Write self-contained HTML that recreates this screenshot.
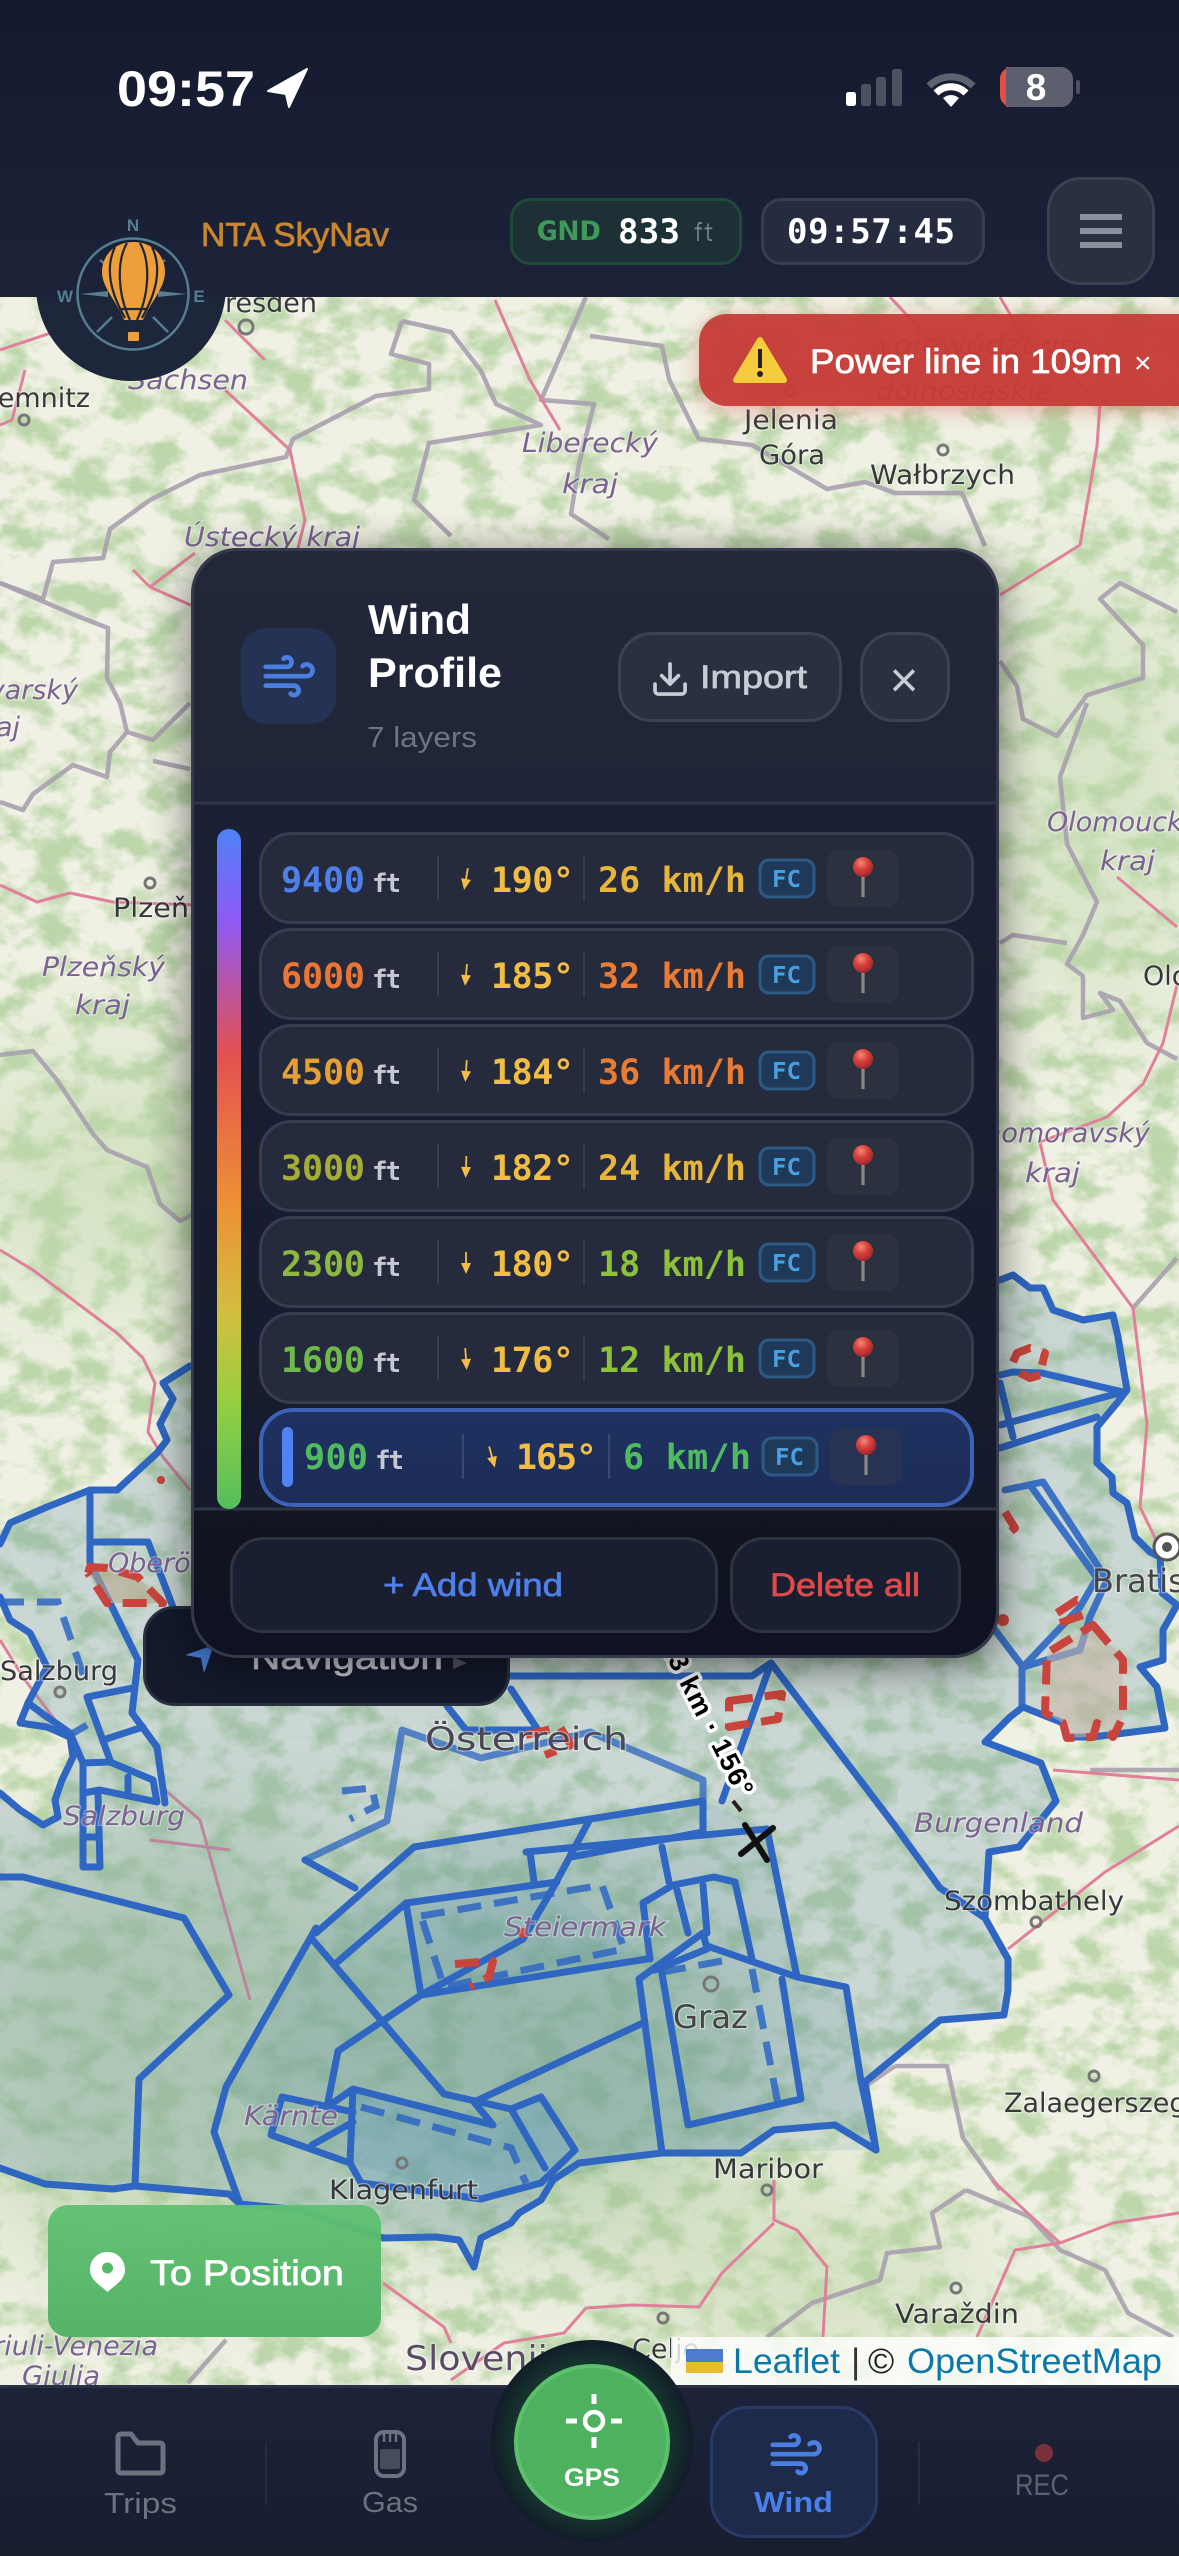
<!DOCTYPE html>
<html lang="en">
<head>
<meta charset="utf-8">
<title>NTA SkyNav</title>
<style>
html,body{margin:0;padding:0;background:#141a2e;width:1179px;height:2556px;overflow:hidden}
svg{display:block;position:absolute;left:0;top:0}
text{font-family:"Liberation Sans",sans-serif}
.s{stroke-width:.7px;paint-order:stroke}
.m{font-family:"DejaVu Sans Mono","Liberation Mono",monospace;font-weight:700;font-size:35px}
.ft{font-family:"DejaVu Sans Mono","Liberation Mono",monospace;font-weight:700;font-size:26px;fill:#c6c9d2}
.fc{font-family:"DejaVu Sans Mono","Liberation Mono",monospace;font-weight:700;font-size:23px;fill:#4b9fe0}
.deg{fill:#f2bd45}
.c{font-family:"DejaVu Sans",sans-serif;font-size:27px;fill:#38383c;stroke:#fff;stroke-opacity:.4;stroke-width:2.500px;paint-order:stroke}
.r{font-family:"DejaVu Sans",sans-serif;font-style:italic;font-size:27px;fill:#7b6290;stroke:#fff;stroke-opacity:.35;stroke-width:2.500px;paint-order:stroke}
.a{fill:none;stroke:#2e66c2;stroke-width:7;stroke-linejoin:round;stroke-linecap:round}
.d{fill:none;stroke:#2e66c2;stroke-width:7;stroke-dasharray:24 13;opacity:.85}
.x{fill:none;stroke:#c8443c;stroke-width:8;stroke-linejoin:round;stroke-dasharray:24 12}
.b{fill:none;stroke:#a9a0ae;stroke-width:4.500;stroke-linejoin:round;opacity:.9}
.p{fill:none;stroke:#e0809a;stroke-width:3;stroke-linejoin:round}
</style>
</head>
<body>
<svg width="1179" height="2556" viewBox="0 0 1179 2556" xmlns="http://www.w3.org/2000/svg">
<defs>
<filter id="gn" x="0" y="0" width="100%" height="100%" color-interpolation-filters="sRGB">
<feTurbulence type="fractalNoise" baseFrequency=".028 .036" numOctaves="5" seed="11"/>
<feColorMatrix values="0 0 0 0 .74  0 0 0 0 .84  0 0 0 0 .67  3.6 0 0 0 -1.55"/>
</filter>
<filter id="bl40"><feGaussianBlur stdDeviation="60"/></filter>
<filter id="sh" x="-20%" y="-20%" width="140%" height="140%"><feGaussianBlur stdDeviation="22"/></filter>
<filter id="sh2" x="-20%" y="-50%" width="140%" height="200%"><feGaussianBlur stdDeviation="11"/></filter>
<linearGradient id="hdr" x1="0" y1="0" x2="0" y2="1"><stop offset="0" stop-color="#141a2e"/><stop offset="1" stop-color="#1c2339"/></linearGradient>
<linearGradient id="nav" x1="0" y1="0" x2="0" y2="1"><stop offset="0" stop-color="#1c2338"/><stop offset="1" stop-color="#181d30"/></linearGradient>
<linearGradient id="ph" x1="0" y1="0" x2="0" y2="1"><stop offset="0" stop-color="#222839"/><stop offset="1" stop-color="#1f2538"/></linearGradient>
<linearGradient id="pl" x1="0" y1="0" x2="0" y2="1"><stop offset="0" stop-color="#1b2034"/><stop offset="1" stop-color="#151a2d"/></linearGradient>
<linearGradient id="pf" x1="0" y1="0" x2="0" y2="1"><stop offset="0" stop-color="#11151f"/><stop offset="1" stop-color="#0e1222"/></linearGradient>
<linearGradient id="bar" x1="0" y1="0" x2="0" y2="1">
<stop offset="0" stop-color="#4f82f6"/><stop offset=".13" stop-color="#8c5af8"/><stop offset=".33" stop-color="#e35050"/><stop offset=".55" stop-color="#ee9035"/><stop offset=".72" stop-color="#d0c040"/><stop offset=".85" stop-color="#92cf40"/><stop offset="1" stop-color="#55bf5e"/>
</linearGradient>
<linearGradient id="sel" x1="0" y1="0" x2="0" y2="1"><stop offset="0" stop-color="#1f3260"/><stop offset="1" stop-color="#1c2c58"/></linearGradient>
<linearGradient id="tp" x1="0" y1="0" x2="0" y2="1"><stop offset="0" stop-color="#60c172" stop-opacity=".96"/><stop offset="1" stop-color="#4fb163" stop-opacity=".96"/></linearGradient>
<radialGradient id="ball" cx=".4" cy=".3" r=".75"><stop offset="0" stop-color="#f48a80"/><stop offset=".45" stop-color="#d8403c"/><stop offset="1" stop-color="#96242a"/></radialGradient>
<radialGradient id="gpsg" cx=".5" cy=".5" r=".5"><stop offset=".72" stop-color="#173a2e"/><stop offset="1" stop-color="#111c28"/></radialGradient>
<clipPath id="mapc"><rect x="0" y="297" width="1179" height="2090"/></clipPath>
<clipPath id="pc"><rect x="191" y="548" width="808" height="1110" rx="46"/></clipPath>
<g id="pin"><rect x="-1.600" y="0" width="3.200" height="28" fill="#8d8a86"/><circle cx="0" cy="-2" r="10" fill="url(#ball)"/></g>
<g id="arrow"><rect x="-.9" y="-11" width="1.800" height="12" fill="#f2bd45"/><path d="M-5 0H5L0 11Z" fill="#f2bd45"/></g>
<g id="row">
<rect x="260.500" y="1.500" width="712" height="89" rx="31" fill="#252a3c" stroke="#373c4e" stroke-width="3"/>
<path d="M438 24V69M584 24V69" stroke="#3a3f50" stroke-width="2"/>
<rect x="760" y="28" width="54" height="37" rx="9" fill="#1f3a58" stroke="#2c5a88" stroke-width="3"/>
<rect x="827" y="18" width="72" height="57" rx="12" fill="#2c3140"/>
<use href="#pin" x="863" y="37"/>
</g>
</defs>

<!-- MAP -->
<g clip-path="url(#mapc)">
<rect x="0" y="297" width="1179" height="2090" fill="#f0f1e4"/>
<rect x="0" y="297" width="1179" height="2090" filter="url(#gn)"/>
<g filter="url(#bl40)" opacity=".55">
<ellipse cx="180" cy="2050" rx="240" ry="230" fill="#a9c79a"/>
<ellipse cx="520" cy="2060" rx="240" ry="180" fill="#93b98e"/>
<ellipse cx="120" cy="1180" rx="180" ry="130" fill="#bfd8ab"/>
<ellipse cx="1100" cy="800" rx="100" ry="240" fill="#bfd8ab"/>
<ellipse cx="800" cy="2280" rx="180" ry="90" fill="#b9d3a3"/>
</g>

<!-- borders and roads -->
<path class="b" d="M402 321L391 354L429 364L429 389L376 396L293 439L286 457L200 475L150 500L110 529L103 558L53 562L43 599L0 583"/>
<path class="b" d="M590 336L662 346L669 379L699 439L752 445L827 489L865 482L895 493L962 493L985 546"/>
<path class="b" d="M402 321L451 332L481 371L496 404L541 425L429 443L414 500L451 536"/>
<path class="b" d="M586 297L541 400L594 404L579 464L571 514L609 539" stroke-width="4"/>
<path class="b" d="M0 802L23 810L33 794L73 765L107 777L110 752L127 732L120 703L107 678L108 628L77 616L0 583"/>
<path class="b" d="M127 732L153 740L190 703M153 761L190 769"/>
<path class="b" d="M0 1055L33 1051L57 1080L93 1134L107 1150L147 1167L160 1204L180 1221L195 1213"/>
<path class="b" d="M1000 661L1017 686L1023 719L1057 736L1087 695L1143 678L1143 645L1100 599L1120 583L1177 612"/>
<path class="b" d="M1087 703L1060 777L1067 844L1097 902L1083 935L1067 964L1083 976L1083 1018L1113 1010L1100 993L1120 1001L1147 1043L1177 1059"/>
<path class="b" d="M1000 943L1013 935L1067 943M1133 1308L1177 1258"/>
<path class="b" d="M966 2190L932 2213L940 2247L887 2253L880 2280L812 2303L767 2337M966 2190L1030 2217L1060 2250L1105 2270L1128 2313L1173 2337M895 2066L947 2066L963 2138L1000 2190M226 2340L188 2383"/>
<path class="b" d="M1179 1770L1090 1770M895 2066L860 2090" stroke-width="3"/>
<path class="p" d="M0 885L37 902L70 893L113 902L195 905"/>
<path class="p" d="M0 1250L33 1270L117 1333L143 1358L155 1383L148 1432L163 1457L190 1490"/>
<path class="p" d="M133 570L150 587L195 607M150 587L195 553M0 350L60 330L120 320M25 370L12 420L0 425"/>
<path class="p" d="M1117 877L1177 927M1177 985L1163 1043L1143 1084L1107 1117L1040 1142L1053 1200L1133 1308L1147 1424L1140 1507L1160 1548"/>
<path class="p" d="M1000 595L1080 545L1097 446L1100 404" stroke="#eda98d"/>
<path class="p" d="M774 2180L774 2220L797 2230L827 2267L823 2337M774 2223L722 2273L699 2307L632 2305L586 2308L564 2333L504 2343L451 2380M383 2283L444 2327L451 2343M992 2180L1060 2243L1015 2250L977 2337M1060 2243L1113 2223L1179 2213"/>
<path class="p" d="M1053 1770L1179 1780M1179 1826L1105 1872L1008 1949M225 390L290 450L305 520L290 580M225 320L265 360M495 300L530 380L560 430M890 297L930 340L985 360M1000 297L1025 340L1100 400"/>
<path class="p" d="M0 1640L25 1680L55 1720M165 1790L200 1820L225 1910L250 2000M150 1840L230 1850" stroke-width="3"/>

<!-- Austria tint -->
<path d="M0 1544L10 1523L47 1507L90 1490L117 1490L157 1453L167 1440L160 1424L173 1399L163 1383L190 1366L500 1300L1000 1280L1013 1275L1030 1288L1043 1288L1053 1310L1083 1320L1113 1315L1118 1337L1127 1390L1117 1403L1097 1427L1097 1463L1112 1477L1113 1493L1127 1503L1135 1537L1150 1552L1160 1557L1162 1593L1177 1605L1163 1630L1163 1660L1140 1667L1157 1687L1165 1728L1093 1737L1067 1737L1063 1723L1023 1707L1010 1717L985 1742L1041 1763L1056 1801L1019 1847L989 1852L985 1918L1008 1959L1008 1990L1004 2015L940 2020L865 2082L876 2150L835 2125L774 2130L741 2153L662 2153L579 2163L553 2180L541 2200L519 2213L511 2223L481 2238L474 2267L459 2240L436 2237L383 2238L240 2204L229 2194L135 2186L113 2189L45 2184L0 2168L0 1793L20 1810L43 1825L58 1817L55 1800L62 1780L73 1757L70 1737L47 1727L20 1723L28 1703L47 1667L30 1633L10 1620L0 1597Z" fill="#5f8fa8" fill-opacity=".26"/>
<path d="M312 1933L414 1847L703 1801L767 1829L797 1977L846 1987L876 2150L662 2153L481 2199L350 2163L271 2135L226 2087Z" fill="#4f8a9c" fill-opacity=".14"/>
<path d="M406 1903L557 1882L647 1959L421 1995Z" fill="#3f80b8" fill-opacity=".12"/>
<path d="M353 2089L493 2125L541 2097L575 2150L541 2183L481 2199L361 2183L350 2163Z" fill="#4a90d0" fill-opacity=".22"/>

<!-- Airspace outlines -->
<path class="a" d="M0 1544L10 1523L47 1507L90 1490L117 1490L157 1453L167 1440L160 1424L173 1399L163 1383L190 1366"/>
<path class="a" d="M1000 1280L1013 1275L1030 1288L1043 1288L1053 1310L1083 1320L1113 1315L1118 1337L1127 1390L1117 1403L1097 1427L1097 1463L1112 1477L1113 1493L1127 1503L1135 1537L1150 1552L1160 1557L1162 1593L1177 1605L1163 1630L1163 1660L1140 1667L1157 1687L1165 1728L1093 1737L1067 1737L1063 1723L1023 1707L1010 1717L985 1742L1041 1763L1056 1801L1019 1847L989 1852L985 1918L1008 1959L1008 1990L1004 2015L940 2020L865 2082L876 2150L835 2125L774 2130L741 2153L662 2153L579 2163L553 2180L541 2200L519 2213L511 2223L481 2238L474 2267L459 2240L436 2237L383 2238L300 2210L240 2204L229 2194L135 2186L113 2189L45 2184L0 2168"/>
<path class="a" d="M0 1793L20 1810L43 1825L58 1817L55 1800L62 1780L73 1757L70 1737L47 1727L20 1723L28 1703L47 1667L30 1633L10 1620L0 1597"/>
<path class="a" d="M90 1490L90 1563L110 1603L138 1660L132 1713L157 1747L165 1803M92 1542L148 1542L173 1607M87 1697L133 1688M87 1697L110 1760M103 1740L143 1727M83 1763L110 1762L153 1780L157 1802L100 1790L83 1793M128 1777L128 1795M83 1763L83 1867L100 1867L98 1793M83 1837L98 1837M28 1703L47 1717L70 1733L83 1763"/>
<path class="a" d="M0 1877L23 1877L184 1918L229 1995L139 2079L135 2186M316 1928L226 2087L214 2132L240 2204M312 1939L444 2094L511 2109"/>
<path class="a" d="M305 1860L387 1821L402 1730L481 1758L590 1732L703 1780L703 1832" opacity=".75"/>
<path class="a" d="M509 1676L752 1676L771 1663L895 1826L940 1888L985 1918M771 1663L722 1801M447 1706L466 1730L538 1730L511 1689"/>
<path class="a" d="M305 1860L355 1888M316 1933L414 1847L703 1801L703 1832L571 1857M526 1852L767 1829M530 1852L534 1882M590 1819L553 1888L523 1939L421 1995M662 1847L669 1882M406 1903L557 1882M406 1903L421 1995L647 1959M334 1965L406 1903"/>
<path class="a" d="M639 1979L662 2153M643 1903L650 1959M643 1903L673 1885L714 1877L735 1882L752 1959M767 1829L797 1977M677 1890L688 1933M703 1885L707 1933M639 1979L703 1933L707 1949L655 1970M707 1946L797 1977L846 1987L861 2081L876 2150"/>
<path class="a" d="M662 1974L688 2125L801 2099L782 1979"/>
<path class="a" d="M338 2051L421 1995M338 2051L327 2107L353 2089L493 2125L474 2102L643 2023M282 2097L271 2135L350 2163L361 2183L481 2199L541 2183L575 2150L541 2097L511 2109M282 2097L353 2112M353 2089L350 2163M511 2109L545 2168M312 2145L353 2122"/>
<path class="a" d="M1000 1375L1013 1372L1042 1373L1123 1392L1000 1425M1000 1448L1097 1417M1000 1383L1013 1437"/>
<path class="a" d="M1005 1490L1043 1482L1107 1580L1090 1617L1080 1650L1023 1667L995 1630M1030 1485L1097 1578L1080 1607L1023 1667M1022 1667L1022 1707" stroke-width="6" opacity=".9"/>
<path class="d" d="M421 1916L602 1885L624 1949L444 1987Z"/>
<path class="d" d="M361 2107L511 2148L526 2183"/>
<path class="d" d="M662 1972L722 1961M752 1969L778 2104"/>
<path class="d" d="M342 1791L372 1788L376 1806L350 1819"/>
<path class="d" d="M0 1602L58 1602L85 1680M160 1680L195 1665M70 1735L87 1725"/>

<!-- red -->
<path d="M88 1573L107 1568L138 1577L163 1603L107 1603Z" fill="#b7a98c" fill-opacity=".6"/>
<path class="x" d="M88 1573L90 1567L107 1568L138 1577L143 1583L163 1603L120 1603L107 1603L88 1573"/>
<path class="x" d="M455 1964L493 1961L489 1977L470 1987" stroke-dasharray="none"/>
<path class="x" d="M729 1701L782 1694L778 1719L729 1727Z"/>
<path class="x" d="M526 1735L560 1727L571 1745L545 1755" stroke-dasharray="none"/>
<path class="x" d="M1013 1362L1017 1353L1030 1348L1045 1353L1042 1365M1020 1373L1030 1378L1040 1375" stroke-dasharray="none"/>
<path d="M1093 1625L1123 1660L1123 1717L1113 1737L1097 1723L1093 1737L1067 1738L1063 1723L1045 1713L1047 1653Z" fill="#cdb7a8" fill-opacity=".55"/>
<path class="x" d="M1093 1625L1123 1660L1123 1717L1113 1737L1097 1723L1093 1737L1067 1738L1063 1723L1045 1713L1047 1653Z"/>
<path class="x" d="M1057 1613L1077 1600L1088 1605M1060 1623L1083 1615M1005 1512L1015 1528L1010 1532" stroke-dasharray="none"/>
<circle cx="523" cy="1933" r="5" fill="#c8443c"/><circle cx="1003" cy="1620" r="6" fill="#c8443c"/><circle cx="161" cy="1480" r="4" fill="#c8443c"/>

<!-- markers -->
<g fill="none" stroke="#777" stroke-width="3">
<circle cx="943" cy="450" r="5"/><circle cx="246" cy="327" r="7"/><circle cx="24" cy="420" r="5"/><circle cx="711" cy="1984" r="7"/><circle cx="1036" cy="1922" r="5"/><circle cx="402" cy="2163" r="5"/><circle cx="1094" cy="2076" r="5"/><circle cx="956" cy="2288" r="5"/><circle cx="767" cy="2190" r="5"/><circle cx="60" cy="1692" r="5"/><circle cx="663" cy="2318" r="5"/><circle cx="150" cy="883" r="5"/><circle cx="790" cy="391" r="5"/>
</g>
<circle cx="1167" cy="1547" r="13" fill="#fff" stroke="#555" stroke-width="3"/><circle cx="1167" cy="1547" r="5" fill="#555"/>

<!-- labels -->
<text class="c" x="317" y="312" text-anchor="end">Dresden</text>
<text class="r" x="128" y="389" textLength="120" lengthAdjust="spacingAndGlyphs">Sachsen</text>
<text class="c" x="90" y="407" text-anchor="end">Chemnitz</text>
<text class="r" x="522" y="452" textLength="136" lengthAdjust="spacingAndGlyphs">Liberecký</text>
<text class="r" x="562" y="493" textLength="56" lengthAdjust="spacingAndGlyphs">kraj</text>
<text class="r" x="184" y="546" textLength="176" lengthAdjust="spacingAndGlyphs">Ústecký kraj</text>
<text class="c" x="744" y="429" textLength="94" lengthAdjust="spacingAndGlyphs">Jelenia</text>
<text class="c" x="759" y="464" textLength="66" lengthAdjust="spacingAndGlyphs">Góra</text>
<text class="c" x="870" y="484" textLength="145" lengthAdjust="spacingAndGlyphs">Wałbrzych</text>
<text class="r" x="868" y="354" textLength="210" lengthAdjust="spacingAndGlyphs">województwo</text>
<text class="r" x="876" y="400" textLength="177" lengthAdjust="spacingAndGlyphs">dolnośląskie</text>
<text class="r" x="78" y="699" text-anchor="end">Karlovarský</text>
<text class="r" x="20" y="736" text-anchor="end">kraj</text>
<text class="c" x="113" y="917" textLength="76" lengthAdjust="spacingAndGlyphs">Plzeň</text>
<text class="r" x="42" y="976" textLength="123" lengthAdjust="spacingAndGlyphs">Plzeňský</text>
<text class="r" x="75" y="1014" textLength="55" lengthAdjust="spacingAndGlyphs">kraj</text>
<text class="r" x="1047" y="831">Olomoucký</text>
<text class="r" x="1100" y="870" textLength="55" lengthAdjust="spacingAndGlyphs">kraj</text>
<text class="c" x="1143" y="985">Olomouc</text>
<text class="r" x="1150" y="1142" text-anchor="end">Jihomoravský</text>
<text class="r" x="1025" y="1182" textLength="55" lengthAdjust="spacingAndGlyphs">kraj</text>
<text class="r" x="108" y="1572">Oberösterreich</text>
<text class="c" x="0" y="1680" textLength="118" lengthAdjust="spacingAndGlyphs">Salzburg</text>
<text class="r" x="63" y="1825" textLength="122" lengthAdjust="spacingAndGlyphs">Salzburg</text>
<text class="c" x="425" y="1750" textLength="203" lengthAdjust="spacingAndGlyphs" style="font-size:32px;fill:#4a4658">Österreich</text>
<text class="r" x="914" y="1832" textLength="169" lengthAdjust="spacingAndGlyphs">Burgenland</text>
<text class="c" x="944" y="1910" textLength="180" lengthAdjust="spacingAndGlyphs">Szombathely</text>
<text class="r" x="504" y="1936" textLength="162" lengthAdjust="spacingAndGlyphs">Steiermark</text>
<text class="c" x="673" y="2028" textLength="75" lengthAdjust="spacingAndGlyphs" style="font-size:32px;fill:#444">Graz</text>
<text class="c" x="1004" y="2112">Zalaegerszeg</text>
<text class="c" x="713" y="2178" textLength="110" lengthAdjust="spacingAndGlyphs">Maribor</text>
<text class="r" x="244" y="2125" textLength="94" lengthAdjust="spacingAndGlyphs">Kärnte</text>
<text class="c" x="329" y="2199" textLength="149" lengthAdjust="spacingAndGlyphs">Klagenfurt</text>
<text class="c" x="895" y="2323" textLength="124" lengthAdjust="spacingAndGlyphs">Varaždin</text>
<text class="c" x="405" y="2370" style="font-size:34px;fill:#5a4a66" textLength="165" lengthAdjust="spacingAndGlyphs">Slovenija</text>
<text class="r" x="158" y="2355" text-anchor="end">Friuli-Venezia</text>
<text class="r" x="22" y="2385" textLength="78" lengthAdjust="spacingAndGlyphs">Giulia</text>
<text class="c" x="632" y="2358">Celje</text>
<text class="c" x="1092" y="1592" style="font-size:32px;fill:#444">Bratislava</text>

<!-- distance label -->
<path d="M733 1801L741 1811" stroke="#222" stroke-width="4"/>
<text x="0" y="0" transform="translate(660,1645) rotate(63)" textLength="172" lengthAdjust="spacing" font-size="27" font-weight="700" fill="#000" stroke="#fff" stroke-width="7" paint-order="stroke" stroke-linejoin="round">13 km · 156°</text>
<path d="M745 1825L767 1860M773 1828L741 1854" stroke="#111" stroke-width="6" stroke-linecap="round"/>

<!-- To Position -->
<rect x="48" y="2205" width="333" height="132" rx="20" fill="url(#tp)"/>
<path d="M107.500 2252C97 2252 90 2260 90 2270C90 2280 100 2285 107.500 2292C115 2285 125 2280 125 2270C125 2260 118 2252 107.500 2252Z" fill="#fff"/>
<circle cx="107.500" cy="2268" r="5.500" fill="#56b869"/>
<text class="s" x="150" y="2285" font-size="35" fill="#fff" stroke="#fff" textLength="194" lengthAdjust="spacingAndGlyphs">To Position</text>

<!-- Attribution -->
<rect x="671" y="2337" width="508" height="50" fill="#fff" fill-opacity=".8"/>
<rect x="686" y="2349" width="37" height="13" fill="#4c7bd0"/><rect x="686" y="2362" width="37" height="11" fill="#e6bd30"/>
<text x="733" y="2373" font-size="35.500" fill="#0c78a8" textLength="107" lengthAdjust="spacingAndGlyphs">Leaflet</text>
<text x="851" y="2373" font-size="35.500" fill="#333">|</text>
<text x="868" y="2373" font-size="35.500" fill="#222">©</text>
<text x="907" y="2373" font-size="35.500" fill="#0c78a8" textLength="255" lengthAdjust="spacingAndGlyphs">OpenStreetMap</text>
</g>

<!-- Alert -->
<rect x="699" y="318" width="520" height="92" rx="28" fill="#d0453f" opacity=".4" filter="url(#sh2)"/>
<rect x="699" y="314" width="520" height="92" rx="28" fill="#c63a36" fill-opacity=".93"/>
<path d="M760 340L784 380H736Z" fill="#f4cc3c" stroke="#f4cc3c" stroke-width="6" stroke-linejoin="round"/>
<rect x="758" y="349" width="4" height="19" fill="#222"/><circle cx="760" cy="374" r="3" fill="#222"/>
<text class="s" x="810" y="373" font-size="34" fill="#fff" stroke="#fff" textLength="312" lengthAdjust="spacingAndGlyphs">Power line in 109m</text>
<text x="1134" y="373" font-size="30" fill="#fff">×</text>

<!-- Logo disc, lower part overhangs the map -->
<circle cx="131" cy="286" r="95" fill="#1e263b"/>

<!-- Header -->
<rect x="0" y="0" width="1179" height="297" fill="url(#hdr)"/>
<text x="117" y="106" font-size="50" font-weight="700" fill="#fff" textLength="138" lengthAdjust="spacingAndGlyphs">09:57</text>
<path d="M307 69L268 91L286 94L289 107Z" fill="#fff" stroke="#fff" stroke-width="2" stroke-linejoin="round"/>
<rect x="846" y="92" width="10" height="14" rx="2.500" fill="#fff"/>
<rect x="861" y="84" width="10" height="22" rx="2.500" fill="#4c5160"/>
<rect x="876" y="77" width="10" height="29" rx="2.500" fill="#4c5160"/>
<rect x="892" y="69" width="10" height="37" rx="2.500" fill="#4c5160"/>
<path d="M929 86A31 31 0 0 1 973 86" fill="none" stroke="#5e6370" stroke-width="7"/>
<path d="M936 93A21 21 0 0 1 966 93" fill="none" stroke="#fff" stroke-width="7"/>
<path d="M943 98Q951 92 959 98L951 107Z" fill="#fff"/>
<rect x="1000" y="67" width="73" height="40" rx="12" fill="#5b5f6e"/>
<path d="M1012 67A12 12 0 0 0 1000 79V95A12 12 0 0 0 1012 107H1006V67Z" fill="#e44f45"/>
<rect x="1076" y="80" width="4" height="14" rx="2" fill="#4c5160"/>
<text x="1036" y="100" font-size="37" font-weight="700" fill="#fff" text-anchor="middle">8</text>

<text class="s" x="201" y="246" font-size="33" fill="#c9862f" stroke="#c9862f" textLength="188" lengthAdjust="spacingAndGlyphs">NTA SkyNav</text>

<rect x="511.500" y="199.500" width="229" height="64" rx="19" fill="#1c3035" stroke="#1f4a3a" stroke-width="3"/>
<text x="536" y="240" font-size="27" font-weight="700" fill="#3f9a5a" textLength="65" lengthAdjust="spacingAndGlyphs" style="font-family:'DejaVu Sans Mono',monospace">GND</text>
<text x="618" y="243" class="m" style="font-size:34px" fill="#fff" textLength="62">833</text>
<text x="693" y="241" font-size="25" fill="#80858f" textLength="21" lengthAdjust="spacingAndGlyphs" style="font-family:'DejaVu Sans Mono',monospace">ft</text>

<rect x="762.500" y="199.500" width="221" height="64" rx="19" fill="#262c40" stroke="#383e50" stroke-width="3"/>
<text x="787" y="243" class="m" style="font-size:34px" fill="#fff" textLength="168">09:57:45</text>

<rect x="1048.500" y="178.500" width="105" height="105" rx="32" fill="#2a3040" stroke="#3a4050" stroke-width="3"/>
<rect x="1080" y="214" width="42" height="6" fill="#8a8f9c"/><rect x="1080" y="228" width="42" height="6" fill="#8a8f9c"/><rect x="1080" y="242" width="42" height="6" fill="#8a8f9c"/>

<!-- Logo artwork -->
<circle cx="133" cy="294" r="55.500" fill="none" stroke="#557e90" stroke-width="2.500"/>
<path d="M80 294L108 291V297ZM187 294L158 291V297Z" fill="#557e90"/>
<path d="M112 317L97 332M153 317L168 332M100 260L105 264M165 260L160 264" stroke="#557e90" stroke-width="2.500"/>
<text x="133" y="231" font-size="17" font-weight="700" fill="#557e90" text-anchor="middle">N</text>
<text x="65" y="302" font-size="17" font-weight="700" fill="#557e90" text-anchor="middle">W</text>
<text x="199" y="302" font-size="17" font-weight="700" fill="#557e90" text-anchor="middle">E</text>
<path d="M133.500 242C115 242 102 255 102 272C102 288 118 303 124 320L143 320C150 303 165 288 165 272C165 255 152 242 133.500 242Z" fill="#ee9f3b"/>
<path d="M127 243C116 262 118 295 130 320M140 243C151 262 149 295 137 320M115 247C104 270 112 295 125 318M152 247C163 270 155 295 142 318M119 309H148" fill="none" stroke="#1d2538" stroke-width="2.200"/>
<path d="M124 320L129 333M143 320L138 333" stroke="#1d2538" stroke-width="1.800"/>
<rect x="128" y="332" width="11" height="9" rx="1" fill="#ee9f3b"/>

<!-- Navigation chip -->
<rect x="144.500" y="1607.500" width="364" height="97" rx="30" fill="#141a2c" stroke="#2b3040" stroke-width="3"/>
<path d="M185 1655L214 1645L204 1673L201 1658Z" fill="#4a7fe0"/>
<text class="s" x="251" y="1669" font-size="34" fill="#c8ccd4" stroke="#c8ccd4" textLength="192" lengthAdjust="spacingAndGlyphs">Navigation</text>
<path d="M453 1657L467 1663L453 1669Z" fill="#555b6c"/>

<!-- Panel -->
<rect x="191" y="556" width="808" height="1110" rx="46" fill="#000" opacity=".55" filter="url(#sh)"/>
<g clip-path="url(#pc)">
<rect x="191" y="548" width="808" height="256" fill="url(#ph)"/>
<rect x="191" y="804" width="808" height="705" fill="url(#pl)"/>
<rect x="191" y="1509" width="808" height="149" fill="url(#pf)"/>
<path d="M191 803H999M191 1509H999" stroke="#2f3546" stroke-width="3"/>
<rect x="217" y="829" width="24" height="680" rx="12" fill="url(#bar)"/>
</g>
<rect x="192.500" y="549.500" width="805" height="1107" rx="45" fill="none" stroke="#343a4c" stroke-width="3"/>

<rect x="241" y="628" width="95" height="96" rx="26" fill="#243354"/>
<g transform="translate(261,648) scale(2.350)" fill="none" stroke="#4a7fe0" stroke-width="2" stroke-linecap="round" stroke-linejoin="round">
<path d="M17.700 7.700a2.500 2.500 0 1 1 1.800 4.300H2"/><path d="M9.600 4.600A2 2 0 1 1 11 8H2"/><path d="M12.600 19.400A2 2 0 1 0 14 16H2"/>
</g>
<text x="368" y="634" font-size="42" font-weight="700" fill="#fff" textLength="103" lengthAdjust="spacingAndGlyphs">Wind</text>
<text x="368" y="687" font-size="42" font-weight="700" fill="#fff" textLength="134" lengthAdjust="spacingAndGlyphs">Profile</text>
<text x="367" y="747" font-size="29" fill="#6f7482" textLength="110" lengthAdjust="spacingAndGlyphs">7 layers</text>

<rect x="619.500" y="633.500" width="221" height="87" rx="32" fill="#2a3040" stroke="#3c4252" stroke-width="3"/>
<g transform="translate(650,659) scale(1.670)" fill="none" stroke="#c8ccd4" stroke-width="2.200" stroke-linecap="round" stroke-linejoin="round">
<path d="M21 15v4a2 2 0 0 1-2 2H5a2 2 0 0 1-2-2v-4"/><path d="M7 10l5 5 5-5"/><path d="M12 15V3"/>
</g>
<text class="s" x="700" y="688" font-size="32" fill="#c8ccd4" stroke="#c8ccd4" textLength="107" lengthAdjust="spacingAndGlyphs">Import</text>
<rect x="861.500" y="633.500" width="87" height="87" rx="32" fill="#2a3040" stroke="#3c4252" stroke-width="3"/>
<text x="904" y="697" font-size="50" fill="#c8ccd4" text-anchor="middle">×</text>

<!-- Rows -->
<g transform="translate(0,832)"><use href="#row"/>
<text class="m" x="281" y="60" fill="#4f7fe8" textLength="84">9400</text><text class="ft" x="372" y="60" textLength="29">ft</text>
<use href="#arrow" transform="translate(466,47) rotate(10)"/>
<text class="m deg" x="491" y="60" textLength="83">190°</text>
<text class="m" x="598" y="60" fill="#e6b53c" textLength="148">26 km/h</text>
<text class="fc" x="772" y="55" textLength="29" lengthAdjust="spacingAndGlyphs">FC</text></g>

<g transform="translate(0,928)"><use href="#row"/>
<text class="m" x="281" y="60" fill="#ea7534" textLength="84">6000</text><text class="ft" x="372" y="60" textLength="29">ft</text>
<use href="#arrow" transform="translate(466,47) rotate(5)"/>
<text class="m deg" x="491" y="60" textLength="83">185°</text>
<text class="m" x="598" y="60" fill="#ea7b34" textLength="148">32 km/h</text>
<text class="fc" x="772" y="55" textLength="29" lengthAdjust="spacingAndGlyphs">FC</text></g>

<g transform="translate(0,1024)"><use href="#row"/>
<text class="m" x="281" y="60" fill="#e5a033" textLength="84">4500</text><text class="ft" x="372" y="60" textLength="29">ft</text>
<use href="#arrow" transform="translate(466,47) rotate(4)"/>
<text class="m deg" x="491" y="60" textLength="83">184°</text>
<text class="m" x="598" y="60" fill="#ea7b34" textLength="148">36 km/h</text>
<text class="fc" x="772" y="55" textLength="29" lengthAdjust="spacingAndGlyphs">FC</text></g>

<g transform="translate(0,1120)"><use href="#row"/>
<text class="m" x="281" y="60" fill="#a6ad35" textLength="84">3000</text><text class="ft" x="372" y="60" textLength="29">ft</text>
<use href="#arrow" transform="translate(466,47) rotate(2)"/>
<text class="m deg" x="491" y="60" textLength="83">182°</text>
<text class="m" x="598" y="60" fill="#e6b53c" textLength="148">24 km/h</text>
<text class="fc" x="772" y="55" textLength="29" lengthAdjust="spacingAndGlyphs">FC</text></g>

<g transform="translate(0,1216)"><use href="#row"/>
<text class="m" x="281" y="60" fill="#8cb740" textLength="84">2300</text><text class="ft" x="372" y="60" textLength="29">ft</text>
<use href="#arrow" transform="translate(466,47)"/>
<text class="m deg" x="491" y="60" textLength="83">180°</text>
<text class="m" x="598" y="60" fill="#8dc13c" textLength="148">18 km/h</text>
<text class="fc" x="772" y="55" textLength="29" lengthAdjust="spacingAndGlyphs">FC</text></g>

<g transform="translate(0,1312)"><use href="#row"/>
<text class="m" x="281" y="60" fill="#6fba4c" textLength="84">1600</text><text class="ft" x="372" y="60" textLength="29">ft</text>
<use href="#arrow" transform="translate(466,47) rotate(-4)"/>
<text class="m deg" x="491" y="60" textLength="83">176°</text>
<text class="m" x="598" y="60" fill="#8dc13c" textLength="148">12 km/h</text>
<text class="fc" x="772" y="55" textLength="29" lengthAdjust="spacingAndGlyphs">FC</text></g>

<!-- Selected row -->
<g>
<rect x="261" y="1410" width="711" height="95" rx="32" fill="url(#sel)" stroke="#3d62b8" stroke-width="4"/>
<rect x="282" y="1427" width="11" height="60" rx="5.500" fill="#4f82f6"/>
<text class="m" x="304" y="1469" fill="#4fba5e" textLength="64">900</text><text class="ft" x="375" y="1469" textLength="29">ft</text>
<path d="M463 1434V1479M609 1434V1479" stroke="#3a4a6c" stroke-width="2"/>
<use href="#arrow" transform="translate(492,1457) rotate(-15)"/>
<text class="m deg" x="516" y="1469" textLength="81">165°</text>
<text class="m" x="623" y="1469" fill="#4fba5e" textLength="128">6 km/h</text>
<rect x="763" y="1438" width="54" height="37" rx="9" fill="#1f3a58" stroke="#2c5a88" stroke-width="3"/>
<text class="fc" x="775" y="1465" textLength="29" lengthAdjust="spacingAndGlyphs">FC</text>
<rect x="830" y="1428" width="72" height="57" rx="12" fill="#283252"/>
<use href="#pin" x="866" y="1447"/>
</g>

<!-- Panel footer buttons -->
<rect x="231.500" y="1538.500" width="485" height="93" rx="32" fill="#191e30" stroke="#2e3340" stroke-width="3"/>
<text class="s" x="383" y="1596" font-size="32" fill="#4f7fe8" stroke="#4f7fe8" textLength="180" lengthAdjust="spacingAndGlyphs">+ Add wind</text>
<rect x="731.500" y="1538.500" width="228" height="93" rx="32" fill="#191e30" stroke="#2e3340" stroke-width="3"/>
<text class="s" x="770" y="1596" font-size="32" fill="#dd4a4a" stroke="#dd4a4a" textLength="150" lengthAdjust="spacingAndGlyphs">Delete all</text>

<!-- Bottom nav -->
<rect x="0" y="2385" width="1179" height="171" fill="url(#nav)"/>
<rect x="0" y="2385" width="1179" height="3" fill="#2b3142"/>
<path d="M266 2442V2505M919 2442V2505" stroke="#272d40" stroke-width="2"/>
<path d="M160 2473H121a3 3 0 0 1-3-3V2437a3 3 0 0 1 3-3H131l7 9H160a3 3 0 0 1 3 3v24a3 3 0 0 1-3 3Z" fill="none" stroke="#6b7280" stroke-width="5" stroke-linejoin="round"/>
<text x="104" y="2513" font-size="29" fill="#6b7280" textLength="73" lengthAdjust="spacingAndGlyphs">Trips</text>
<rect x="376" y="2432" width="28" height="44" rx="8" fill="none" stroke="#6b7280" stroke-width="4"/>
<path d="M384 2432V2442M390 2432V2442M396 2432V2442" stroke="#6b7280" stroke-width="2.500"/>
<rect x="380" y="2449" width="20" height="20" rx="2" fill="#474c5c"/>
<text x="362" y="2512" font-size="29" fill="#6b7280" textLength="56" lengthAdjust="spacingAndGlyphs">Gas</text>

<circle cx="592" cy="2441" r="101" fill="url(#gpsg)"/>
<circle cx="592" cy="2442" r="76" fill="#4db160" stroke="#5cc06c" stroke-width="4"/>
<circle cx="594" cy="2421" r="9" fill="none" stroke="#fff" stroke-width="4.500"/>
<path d="M594 2394V2404M594 2437V2448M566 2421H577M611 2421H622" stroke="#fff" stroke-width="5"/>
<text x="564" y="2486" font-size="25" font-weight="700" fill="#fff" textLength="56" lengthAdjust="spacingAndGlyphs">GPS</text>

<rect x="711.500" y="2407.500" width="165" height="129" rx="36" fill="#1e2a4a" stroke="#2a3a68" stroke-width="3"/>
<g transform="translate(768,2426) scale(2.350)" fill="none" stroke="#4a7fe0" stroke-width="2" stroke-linecap="round" stroke-linejoin="round">
<path d="M17.700 7.700a2.500 2.500 0 1 1 1.800 4.300H2"/><path d="M9.600 4.600A2 2 0 1 1 11 8H2"/><path d="M12.600 19.400A2 2 0 1 0 14 16H2"/>
</g>
<text x="754" y="2512" font-size="29" font-weight="700" fill="#4a7fe8" textLength="79" lengthAdjust="spacingAndGlyphs">Wind</text>

<circle cx="1044" cy="2453" r="9" fill="#7a3038"/>
<text x="1015" y="2495" font-size="30" fill="#5c6270" textLength="54" lengthAdjust="spacingAndGlyphs">REC</text>
</svg>
</body>
</html>
